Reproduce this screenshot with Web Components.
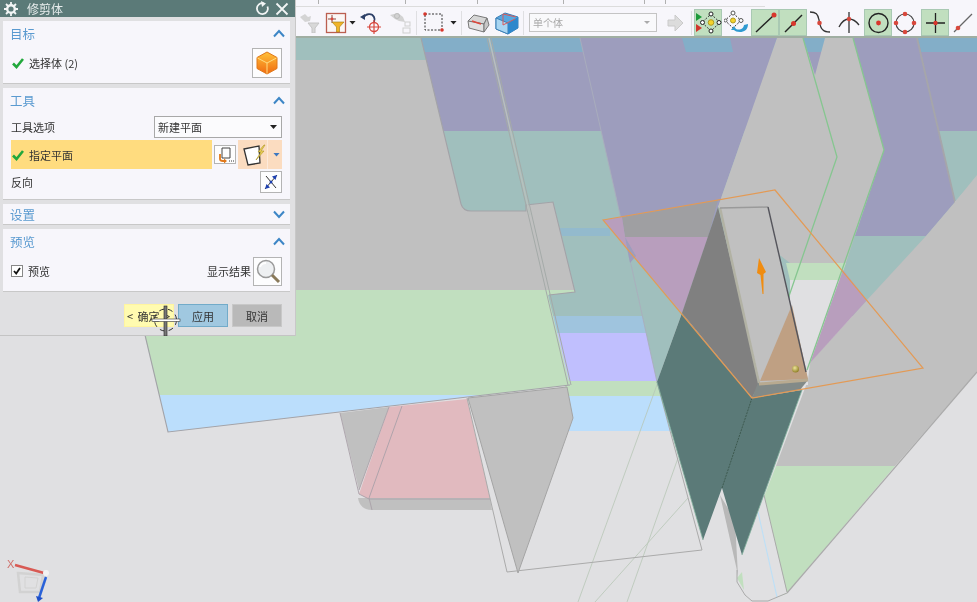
<!DOCTYPE html>
<html>
<head>
<meta charset="utf-8">
<title>修剪体</title>
<style>
  html, body { margin: 0; height: 100%; overflow: hidden; background: #e0e0e2; }
  body { font-family: "Noto Sans CJK SC", "Liberation Sans", sans-serif; }
</style>
</head>
<body>
<cad-scene></cad-scene>

<cad-toolbar>
  <tb-btn style="margin-left:4px;width:21px"><svg viewBox="0 0 21 21" width="21" height="21" fill="none"><path d="M1 5l5-3 3 3 3-1-1 5-5 1-2-2z" fill="#d4d4d4"/><path d="M9 11h11l-4 5v5h-3v-5z" fill="#d8d8d8" stroke="#c4c4c4"/></svg></tb-btn>
  <tb-btn style="margin-left:5px;width:22px"><svg viewBox="0 0 22 22" width="22" height="22" fill="none"><rect x="1.500" y="1.500" width="19" height="19" fill="#fbf7f5" stroke="#bb5f50" stroke-width="1.300"/><path d="M7 3v8M3 7h8" stroke="#8a4a40"/><circle cx="7" cy="7" r="1.400" fill="#d9483b"/><path d="M7 10h12l-4.500 5v5h-3v-5z" fill="#f0b428" stroke="#a07a10" stroke-width=".6"/></svg></tb-btn>
  <tb-caret style="margin-left:2px"></tb-caret>
  <tb-btn style="margin-left:3px;width:26px"><svg viewBox="0 0 26 24" width="26" height="24" fill="none"><path d="M4 7c3-5 9-5 11-1 1 2 1 3 0 5" stroke="#2c3f66" stroke-width="1.800"/><path d="M1 6l5-3v6z" fill="#2c3f66"/><circle cx="15" cy="16" r="4.500" stroke="#d8483f" stroke-width="1.300"/><path d="M15 9v14M8 16h14" stroke="#d8483f" stroke-width="1.200"/></svg></tb-btn>
  <tb-btn style="margin-left:3px;width:25px"><svg viewBox="0 0 25 24" width="25" height="24" fill="none"><path d="M2 4l8-2 5 4 2 5-6-1-4-2z" fill="#d2d2d2"/><circle cx="9" cy="5" r="2.500" stroke="#bcbcbc"/><rect x="17" y="11" width="5" height="4" stroke="#cfcfcf"/><rect x="15" y="17" width="7" height="5" stroke="#cfcfcf"/></svg></tb-btn>
  <tb-sep style="margin-left:3px"></tb-sep>
  <tb-btn style="margin-left:6px;width:21px"><svg viewBox="0 0 21 21" width="21" height="21" fill="none"><rect x="2" y="2" width="17" height="16" stroke="#333" stroke-dasharray="2 1.500"/><circle cx="2" cy="2" r="1.800" fill="#d8362c"/><circle cx="19" cy="18" r="1.800" fill="#d8362c"/></svg></tb-btn>
  <tb-caret style="margin-left:6px"></tb-caret>
  <tb-sep style="margin-left:4px"></tb-sep>
  <tb-btn style="margin-left:5px;width:23px"><svg viewBox="0 0 23 22" width="23" height="22" fill="none"><path d="M1 9l6-6 13 3-3 6z" fill="#d6d6d6" stroke="#777"/><path d="M1 9l16 3v8L2 16z" fill="#e2e2e2" stroke="#777"/><path d="M17 12l3-6 2 7-5 7z" fill="#c8c8c8" stroke="#777"/><path d="M5 9l9 3" stroke="#e0483c" stroke-width="1.400"/></svg></tb-btn>
  <tb-btn style="margin-left:5px;width:24px"><svg viewBox="0 0 24 24" width="24" height="24" fill="none"><path d="M1 7l9-5 13 4v11l-10 6-12-5z" fill="#58a8e0" stroke="#3b7fb5"/><path d="M1 7l12 5v11l-12-5z" fill="#a9d6f2" stroke="#3b7fb5"/><path d="M13 12l10-6v11l-10 6z" fill="#2f88cc"/><path d="M8 3v11M8 14l12-6M8 3l13 3" stroke="#d85a5a"/></svg></tb-btn>
  <tb-sep style="margin-left:4px"></tb-sep>
  <tb-select style="margin-left:5px">单个体</tb-select>
  <tb-btn style="margin-left:9px;width:18px"><svg viewBox="0 0 18 18" width="18" height="18"><path d="M2 6h7V1l8 8-8 8v-5H2z" fill="#dcdcdc" stroke="#cacaca"/></svg></tb-btn>
  <tb-sep style="margin-left:7px"></tb-sep>
  <tb-btn on style="margin-left:2px;width:28px"><svg viewBox="0 0 28 27" width="28" height="27" fill="none"><path d="M2 4l6 4-6 4z" fill="#1c9a3a"/><path d="M2 15l6 4-6 4z" fill="#d0362c"/><path d="M17 5l9 8.500-9 8.500-9-8.500z" stroke="#333" stroke-dasharray="2 1.500"/><circle cx="17" cy="13.500" r="2.800" fill="#f4d22c" stroke="#b09a20"/><circle cx="17" cy="5" r="2" fill="#fff" stroke="#222"/><circle cx="17" cy="22" r="2" fill="#fff" stroke="#222"/><circle cx="8.500" cy="13.500" r="2" fill="#fff" stroke="#222"/><circle cx="25" cy="13.500" r="2" fill="#fff" stroke="#222"/></svg></tb-btn>
  <tb-btn style="margin-left:2px;width:26px"><svg viewBox="0 0 26 27" width="26" height="27" fill="none"><path d="M9 4l8 7.500-8 7.500-8-7.500z" stroke="#333" stroke-dasharray="2 1.500"/><circle cx="9" cy="11.500" r="2.500" fill="#f4d22c" stroke="#b09a20"/><circle cx="9" cy="4" r="2" fill="#fff" stroke="#555"/><circle cx="1.500" cy="11.500" r="1.500" fill="#fff" stroke="#555"/><circle cx="17" cy="11.500" r="2" fill="#fff" stroke="#555"/><path d="M24 15c0 6-4 8-8 8-3 0-5-1-6-2l-3 0 3-4 2 3c3 1 7 1 8-4z" fill="#2f9ad0"/></svg></tb-btn>
  <tb-btn on style="margin-left:1px;width:28px"><svg viewBox="0 0 28 27" width="28" height="27" fill="none"><path d="M5 23L22 7" stroke="#222" stroke-width="1.400"/><circle cx="23" cy="6" r="2.500" fill="#d8362c"/></svg></tb-btn>
  <tb-btn on style="width:28px"><svg viewBox="0 0 28 27" width="28" height="27" fill="none"><path d="M6 23L23 6" stroke="#222" stroke-width="1.400"/><circle cx="14.500" cy="14.500" r="2.500" fill="#d8362c"/></svg></tb-btn>
  <tb-btn style="margin-left:2px;width:22px"><svg viewBox="0 0 22 27" width="22" height="27" fill="none"><path d="M1 3c6 0 8 2 9 8 1 4 1 8 4 10 2 2 5 2 7 2" stroke="#333" stroke-width="1.300"/><circle cx="10.500" cy="14" r="2.300" fill="#d8483c"/></svg></tb-btn>
  <tb-btn style="margin-left:7px;width:22px"><svg viewBox="0 0 22 27" width="22" height="27" fill="none"><path d="M11 3v21" stroke="#333" stroke-width="1.300"/><path d="M1 18c3-6 6-8 10-8s7 2 10 6" stroke="#333" stroke-width="1.300"/><circle cx="11" cy="10" r="2.200" fill="#d8483c"/></svg></tb-btn>
  <tb-btn on style="margin-left:4px;width:28px"><svg viewBox="0 0 28 27" width="28" height="27" fill="none"><circle cx="14.500" cy="14" r="9.500" stroke="#222" stroke-width="1.400"/><circle cx="14.500" cy="14" r="2.400" fill="#d8362c"/></svg></tb-btn>
  <tb-btn style="margin-left:1px;width:24px"><svg viewBox="0 0 24 27" width="24" height="27" fill="none"><circle cx="12" cy="14" r="9" stroke="#444" stroke-width="1.200"/><circle cx="12" cy="5" r="2.300" fill="#d8483c"/><circle cx="12" cy="23" r="2.300" fill="#d8483c"/><circle cx="3" cy="14" r="2.300" fill="#d8483c"/><circle cx="21" cy="14" r="2.300" fill="#d8483c"/></svg></tb-btn>
  <tb-btn on style="margin-left:4px;width:28px"><svg viewBox="0 0 28 27" width="28" height="27" fill="none"><path d="M5 14h19M14.500 4v20" stroke="#222" stroke-width="1.300"/><circle cx="14.500" cy="14" r="2.200" fill="#d8362c"/></svg></tb-btn>
  <tb-btn style="margin-left:3px;width:22px"><svg viewBox="0 0 22 27" width="22" height="27" fill="none"><path d="M2 23L20 5" stroke="#666" stroke-width="1.200"/><circle cx="6" cy="19" r="2.300" fill="#d8483c"/></svg></tb-btn>
</cad-toolbar>

<trim-dialog heading="修剪体">
  <dlg-panel heading="目标">
    <dlg-row style="height:30px;margin-top:3px;margin-bottom:5px">
      <check-mark></check-mark><span>选择体 (2)</span>
      <icon-btn size="30" style="margin-left:auto">
        <svg viewBox="0 0 24 24" width="24" height="24"><defs><linearGradient id="o" x1="0" y1="0" x2="0" y2="1"><stop offset="0" stop-color="#ffc23a"/><stop offset="1" stop-color="#f06a10"/></linearGradient></defs><path d="M12 1l10 5.500v11L12 23 2 17.500v-11z" fill="url(#o)" stroke="#e0781a"/><path d="M2.500 7L12 12l9.500-5M12 12v10.500" stroke="#ffdc80" fill="none"/></svg>
      </icon-btn>
    </dlg-row>
  </dlg-panel>

  <dlg-panel heading="工具">
    <dlg-row style="height:22px;margin-top:4px">
      <span>工具选项</span>
      <dlg-select style="margin-left:auto">新建平面</dlg-select>
    </dlg-row>
    <dlg-row style="height:29px;margin-top:2px;gap:2px">
      <req-field><check-mark></check-mark><span>指定平面</span></req-field>
      <icon-btn size="22" style="height:19px">
        <svg viewBox="0 0 20 17" width="20" height="17" fill="none"><path d="M7 2h8v10H7z" stroke="#444"/><path d="M5 8v5c0 1 1 2 3 2h1" stroke="#e0781a" stroke-width="1.800"/><path d="M9 12.500v5l3-2.500z" fill="#e0781a"/><path d="M14 15h1M16 15h1M18 15h1" stroke="#333"/></svg>
      </icon-btn>
      <plane-pick></plane-pick>
    </dlg-row>
    <dlg-row style="height:22px;margin-top:2px;margin-bottom:6px">
      <span>反向</span>
      <icon-btn size="22" style="margin-left:auto">
        <svg viewBox="0 0 20 20" width="20" height="20" fill="none"><path d="M5 4l10 12" stroke="#333"/><path d="M16 3L4 17" stroke="#333"/><path d="M16 3l-5 1.500 3.500 3.500z" fill="#1c3fb0"/><path d="M4 17l5-1.500-3.500-3.500z" fill="#1c3fb0"/><circle cx="10" cy="10" r="1.500" fill="#1c3fb0"/></svg>
      </icon-btn>
    </dlg-row>
  </dlg-panel>

  <dlg-panel heading="设置" collapsed></dlg-panel>

  <dlg-panel heading="预览">
    <dlg-row style="height:30px;margin-top:3px;margin-bottom:5px">
      <check-box></check-box><span style="margin-left:5px">预览</span>
      <span style="margin-left:auto;margin-right:2px">显示结果</span>
      <icon-btn size="29">
        <svg viewBox="0 0 26 26" width="26" height="26" fill="none"><circle cx="11" cy="11" r="8.500" fill="#eef0f2" stroke="#9a9a9a" stroke-width="1.500"/><path d="M5 9c1-3 3-4 6-4" stroke="#fff" stroke-width="2"/><path d="M17 17l7 7" stroke="#8a7a5a" stroke-width="3"/></svg>
      </icon-btn>
    </dlg-row>
  </dlg-panel>

  <dlg-button slot="footer" kind="ok">&lt; 确定 &gt;</dlg-button>
  <dlg-button slot="footer" kind="apply">应用</dlg-button>
  <dlg-button slot="footer" kind="cancel">取消</dlg-button>
</trim-dialog>

<cad-cursor></cad-cursor>

<script>
// the model is a free canvas, everything is in screen coordinates
class CadScene extends HTMLElement {
  constructor() {
    super();
    const shadow = this.attachShadow({ mode: 'open' });
    const teal = '#a0bfbd', purple = '#9d9dbd', grey = '#c0c0c0', green = '#c1dfbf', sky = '#bbdefc';
    const pink = '#b89ebd', edge = '#a3a3a8', dark = '#5b7a78', lime = '#86c690';
    shadow.innerHTML = `
      <style>
        :host { position: absolute; inset: 0; display: block; background: #e0e0e2; }
        svg { display: block; filter: blur(.35px); }
        text { font: 11px "Liberation Sans", sans-serif; fill: #d0706a; }
      </style>
      <svg viewBox="0 0 977 602" width="977" height="602" fill="none">
        <defs>
          <clipPath id="sheet">
            <path d="M100 38H421L461 204Q463 211 471 211H526L526 205L553 202L575 292L548 295L570 385L168 432L100 150Z"/>
          </clipPath>
          <radialGradient id="ball" cx=".4" cy=".35" r=".7"><stop offset="0" stop-color="#eee49a"/><stop offset="1" stop-color="#8a7a20"/></radialGradient>
        </defs>

        <!-- colour bands on the plate behind -->
        <rect x="400" y="38" width="577" height="14" fill="#83aec8"/>
        <rect x="400" y="52" width="577" height="79" fill="${purple}"/>
        <rect x="400" y="131" width="577" height="185" fill="${teal}"/>
        <rect x="540" y="228" width="70" height="8" fill="#93bacd"/>
        <rect x="400" y="316" width="260" height="17" fill="#9fc4de"/>
        <rect x="400" y="333" width="260" height="48" fill="#c0bffe"/>
        <rect x="565" y="381" width="160" height="15" fill="${green}"/>
        <rect x="565" y="396" width="160" height="35" fill="${sky}"/>

        <!-- second plate -->
        <path d="M580 38H777L718 207L708 237H625L615 192Z" fill="${purple}"/>
        <path d="M682 38H730L733 52H686Z" fill="#83aec8"/>
        <path d="M625 237H708L682 313L657 382Z" fill="${teal}"/>
        <path d="M853 38H918L955 202L926 236H855L884 150Z" fill="${purple}"/>
        <path d="M855 236H926L867 300L842 270Z" fill="${teal}"/>
        <path d="M580 38L615 192L657 382" stroke="#a9aebc" stroke-width=".9"/>
        <path d="M917 38L955 202L963 236" stroke="#a6a6aa" stroke-width="1.800"/>
        <path d="M955 202L977 178" stroke="#b6c4c6"/>

        <!-- big grey part on the right -->
        <path d="M867 300L926 236L955 202L977 175V372L895 466H776L808 380L810 362Z" fill="${grey}"/>
        <path d="M776 466H895L786 594L777 597L758 512Z" fill="${green}"/>
        <path d="M977 372L787 593" stroke="#aaa" stroke-width="1.200"/>

        <!-- rounded foot under the teal leaves -->
        <path d="M721 488L737 570V582L745 595L752 601H768L787 593L764 495Z" fill="#e0e0e2"/>
        <path d="M720 495L736 566L738 576L735 520Z" fill="#b8b8b8"/>
        <path d="M737 578L744 590L742 572Z" fill="${green}"/>
        <path d="M758 512L777 597" stroke="#bfdff5" stroke-width="1.200"/>
        <path d="M764 495L787 592M737 570V582L745 595L752 601H768L787 593" stroke="#aaa"/>

        <!-- main sheet -->
        <g clip-path="url(#sheet)">
          <rect x="90" y="30" width="500" height="30" fill="${teal}"/>
          <rect x="90" y="60" width="500" height="230" fill="${grey}"/>
          <rect x="90" y="290" width="500" height="105" fill="${green}"/>
          <rect x="90" y="395" width="500" height="40" fill="${sky}"/>
        </g>
        <path d="M421 38L461 204Q463 211 471 211H526L526 205L553 202L575 292L549 295M145 335L168 432L570 385" stroke="${edge}" stroke-width="1.100"/>
        <path d="M487 38L568 385M491 38L571 385" stroke="#a4aaa8"/>
        <path d="M489 38L530 215" stroke="#b8c0bc" stroke-width="1.500"/>

        <!-- lower block -->
        <path d="M340 413L389 407L359 490Z" fill="${grey}"/>
        <path d="M389 407L467 399L490 498L368 499L359 494Z" fill="#e1babf"/>
        <path d="M358 498Q360 510 372 510H492L490 498Z" fill="${grey}"/>
        <path d="M340 413L359 494M389 407L359 490M402 406L369 498L372 510M359 494L369 499H490" stroke="#a9a0a8" stroke-width=".9"/>

        <!-- thin construction lines and sheet below -->
        <path d="M658 382L578 602M678 458L627 602M688 498L595 602" stroke="#b8c6b6" stroke-width=".8"/>
        <path d="M467 398L507 572L702 550L657 382" stroke="#aaa"/>
        <path d="M468 398L567 387L573 418L518 573Z" fill="${grey}" stroke="#a4a4a4"/>

        <!-- chevrons with green edges -->
        <path d="M777 38H803L815 75L825 38H853L884 150L855 235L846 263H790L718 207Z" fill="${grey}"/>
        <path d="M786 263H846L840 280H790Z" fill="${green}"/>
        <path d="M790 280H840L808 365V385H790Z" fill="#e0e0e2"/>
        <path d="M843 270L867 300L810 363Z" fill="${pink}"/>
        <path d="M803 38L837 157L760 380M853 38L884 150L807 370" stroke="${lime}" stroke-width="1.300"/>

        <!-- what the plane shows through -->
        <path d="M622 217L718 200L708 237H625Z" fill="#9f9fa2"/>
        <path d="M603 220L622 217L625 237H708L682 313Z" fill="${pink}"/>
        <path d="M625 237L630 263L636 256Z" fill="${purple}"/>

        <!-- dark teal leaves -->
        <path d="M657 382L682 313L752 398L802 390L742 555L722 488L703 540Z" fill="${dark}"/>
        <path d="M752 398L722 488" stroke="#3e5a50" stroke-dasharray="2 1"/>
        <path d="M657 382L703 540M802 390L742 555" stroke="#7fae9a" stroke-width=".8"/>

        <!-- wedge -->
        <path d="M718 207L682 313L752 398L760 383Z" fill="#808080"/>
        <path d="M758 383L808 380L800 390L752 398Z" fill="#828a88"/>
        <path d="M720 208L768 207L808 380L760 383Z" fill="${grey}"/>
        <path d="M760 381L792 305L808 379Z" fill="#bfa083"/>
        <path d="M720 208L759 383" stroke="#b2b2a4" stroke-width="2.500"/>
        <path d="M720 208L768 207" stroke="#9a9a9a" stroke-width="1.500"/>
        <path d="M768 207L806 372" stroke="#55555c" stroke-width="1.400"/>
        <path d="M759 384L808 380" stroke="#b8aa90" stroke-width="3"/>

        <!-- datum plane and its handles -->
        <path d="M603 220L775 190L923 368L752 398Z" stroke="#e39a55" stroke-width="1.200"/>
        <path d="M759 258L766 272L763.500 274L763.500 294H762.500L760.500 275L757 273Z" fill="#f08c10"/>
        <circle cx="795.500" cy="369" r="3.500" fill="url(#ball)"/>

        <!-- triad -->
        <text x="7" y="568">X</text>
        <path d="M18 573L43 575L40 592L20 592Z" stroke="#d2d2d2" stroke-width="2.500"/>
        <path d="M25 577L38 578L36 588L25 588Z" stroke="#d2d2d2"/>
        <path d="M15 565L44 573" stroke="#d85a54" stroke-width="2.500"/>
        <path d="M46 577L39 598" stroke="#2a62d8" stroke-width="2.500"/>
        <path d="M36 596L43 598L38 602Z" fill="#1f4fc8"/>
        <circle cx="46" cy="573" r="3" fill="#f2f2f2"/>
      </svg>
    `;
  }
}

class CadToolbar extends HTMLElement {
  constructor() {
    super();
    const shadow = this.attachShadow({ mode: 'open' });
    shadow.innerHTML = `
      <style>
        :host {
          position: absolute; left: 295px; right: 0; top: 0; height: 36px;
          display: block; background: #f7f6fb; border-bottom: 2px solid #a0aea2;
        }
        .top { height: 6px; width: 470px; border-bottom: 1px solid #dcdcdc; display: flex; }
        .top i { width: 1px; height: 4px; background: #b0b0b0; margin-left: 80px; }
        .row { display: flex; align-items: center; height: 27px; margin-top: 2px; filter: blur(.3px); }
      </style>
      <div class="top"><i style="margin-left:23px"></i><i style="margin-left:86px"></i><i style="margin-left:71px"></i><i style="margin-left:85px"></i><i style="margin-left:80px"></i><i style="margin-left:20px"></i></div>
      <div class="row"><slot></slot></div>
    `;
  }
}

class TbBtn extends HTMLElement {
  constructor() {
    super();
    const shadow = this.attachShadow({ mode: 'open' });
    shadow.innerHTML = `
      <style>
        :host { display: flex; align-items: center; justify-content: center; height: 27px; flex: none; box-sizing: border-box; }
        :host([on]) { background: #c1dfbf; box-shadow: inset 0 0 0 1px #a9c9b3; }
        ::slotted(svg) { display: block; }
      </style>
      <slot></slot>
    `;
  }
}

class TbCaret extends HTMLElement {
  constructor() {
    super();
    const shadow = this.attachShadow({ mode: 'open' });
    shadow.innerHTML = `
      <style>
        :host { display: block; flex: none; width: 7px; height: 4px; background: #222; clip-path: polygon(0 0, 100% 0, 50% 100%); }
      </style>
    `;
  }
}

class TbSep extends HTMLElement {
  constructor() {
    super();
    const shadow = this.attachShadow({ mode: 'open' });
    shadow.innerHTML = `<style>:host { display: block; flex: none; width: 1px; height: 24px; background: #dfdfe2; }</style>`;
  }
}

class TbSelect extends HTMLElement {
  constructor() {
    super();
    const shadow = this.attachShadow({ mode: 'open' });
    shadow.innerHTML = `
      <style>
        :host {
          display: flex; align-items: center; flex: none; box-sizing: border-box;
          width: 128px; height: 19px; padding: 0 6px 0 3px;
          background: #f9f9fb; border: 1px solid #c4c4c4; color: #a8a8a8; font-size: 10px;
        }
        b { margin-left: auto; width: 6px; height: 3px; background: #aaa; clip-path: polygon(0 0, 100% 0, 50% 100%); }
      </style>
      <slot></slot><b></b>
    `;
  }
}

class TrimDialog extends HTMLElement {
  constructor() {
    super();
    const shadow = this.attachShadow({ mode: 'open' });
    shadow.innerHTML = `
      <style>
        :host {
          position: absolute; left: 0; top: 0; width: 296px; height: 336px; box-sizing: border-box;
          display: flex; flex-direction: column;
          background: #e0e0e2; border-bottom: 1px solid #c4c4c4; border-right: 1px solid #c8c8c8;
          font-size: 11px; color: #333; filter: blur(.3px);
        }
        header {
          height: 17px; flex: none; display: flex; align-items: center; gap: 9px; padding: 0 6px 0 4px;
          background: #5b7a78; color: #e6ecec; font-size: 12px;
        }
        header svg { display: block; }
        header .refresh { margin-left: auto; margin-right: -4px; }
        .body { display: flex; flex-direction: column; gap: 4px; padding: 4px 5px 0 3px; }
        footer { display: flex; justify-content: flex-end; gap: 4px; margin-top: 12px; padding-right: 13px; }
      </style>
      <header>
        <svg viewBox="0 0 14 14" width="14" height="14" fill="none"><circle cx="7" cy="7" r="3.800" stroke="#f2f5f5" stroke-width="2.400"/><path d="M7 0v3M7 11v3M0 7h3M11 7h3M2 2l2 2M10 10l2 2M12 2l-2 2M4 10l-2 2" stroke="#f2f5f5" stroke-width="1.800"/></svg>
        <span></span>
        <svg class="refresh" viewBox="0 0 15 15" width="15" height="15" fill="none"><path d="M12.500 5.500A5.500 5.500 0 1 1 8.500 2.200" stroke="#f2f5f5" stroke-width="1.800"/><path d="M6 0l5 2.500L7 6z" fill="#f2f5f5"/></svg>
        <svg viewBox="0 0 14 14" width="14" height="14" fill="none"><path d="M1.500 1.500l11 11M12.500 1.500l-11 11" stroke="#f2f5f5" stroke-width="1.800"/></svg>
      </header>
      <div class="body"><slot></slot></div>
      <footer><slot name="footer"></slot></footer>
    `;
    shadow.querySelector('span').textContent = this.getAttribute('heading');
  }
}

class DlgPanel extends HTMLElement {
  constructor() {
    super();
    const shadow = this.attachShadow({ mode: 'open' });
    const collapsed = this.hasAttribute('collapsed');
    shadow.innerHTML = `
      <style>
        :host { display: block; background: #f7f6fb; border-bottom: 1px solid #c8c8c8; box-sizing: border-box; }
        .head {
          display: flex; align-items: center; justify-content: space-between;
          height: ${collapsed ? 20 : 24}px; padding: 0 5px 0 7px; color: #5a9ad0; font-size: 12.500px;
        }
        .body { padding: 0 8px; }
        svg { display: block; }
      </style>
      <div class="head">
        <span></span>
        <svg viewBox="0 0 12 9" width="12" height="9" fill="none"><path d="${collapsed ? 'M1 1.500l5 5.500 5-5.500' : 'M1 7.500l5-5.500 5 5.500'}" stroke="#3d86c6" stroke-width="2"/></svg>
      </div>
      <div class="body"><slot></slot></div>
    `;
    shadow.querySelector('span').textContent = this.getAttribute('heading');
  }
}

class DlgRow extends HTMLElement {
  constructor() {
    super();
    const shadow = this.attachShadow({ mode: 'open' });
    shadow.innerHTML = `
      <style>:host { display: flex; align-items: center; }</style>
      <slot></slot>
    `;
  }
}

class CheckMark extends HTMLElement {
  constructor() {
    super();
    const shadow = this.attachShadow({ mode: 'open' });
    shadow.innerHTML = `
      <style>:host { display: block; flex: none; width: 12px; height: 12px; margin: 0 5px 0 1px; } svg { display: block; }</style>
      <svg viewBox="0 0 12 12" width="12" height="12" fill="none"><path d="M1 6.500l3.500 3.500L11 2" stroke="#22a83c" stroke-width="2.600"/></svg>
    `;
  }
}

class CheckBox extends HTMLElement {
  constructor() {
    super();
    const shadow = this.attachShadow({ mode: 'open' });
    shadow.innerHTML = `
      <style>
        :host { display: block; flex: none; box-sizing: border-box; width: 12px; height: 12px; background: #fff; border: 1px solid #888; }
        svg { display: block; }
      </style>
      <svg viewBox="0 0 10 10" width="10" height="10" fill="none"><path d="M2 5l2.200 2.500L8 2" stroke="#111" stroke-width="1.800"/></svg>
    `;
  }
}

class IconBtn extends HTMLElement {
  constructor() {
    super();
    const shadow = this.attachShadow({ mode: 'open' });
    const size = this.getAttribute('size') || 22;
    shadow.innerHTML = `
      <style>
        :host {
          display: flex; align-items: center; justify-content: center; flex: none; box-sizing: border-box;
          width: ${size}px; height: ${size}px; background: #fdfdfe; border: 1px solid #b4b4b4;
        }
        ::slotted(svg) { display: block; }
      </style>
      <slot></slot>
    `;
  }
}

class DlgSelect extends HTMLElement {
  constructor() {
    super();
    const shadow = this.attachShadow({ mode: 'open' });
    shadow.innerHTML = `
      <style>
        :host {
          display: flex; align-items: center; box-sizing: border-box; width: 128px; height: 22px;
          padding: 0 4px 0 3px; background: #fbfbfd; border: 1px solid #a8a8a8; color: #333;
        }
        b { margin-left: auto; width: 7px; height: 4px; background: #222; clip-path: polygon(0 0, 100% 0, 50% 100%); }
      </style>
      <slot></slot><b></b>
    `;
  }
}

class ReqField extends HTMLElement {
  constructor() {
    super();
    const shadow = this.attachShadow({ mode: 'open' });
    shadow.innerHTML = `
      <style>:host { display: flex; align-items: center; width: 201px; height: 29px; flex: none; background: #ffdc7f; }</style>
      <slot></slot>
    `;
  }
}

class PlanePick extends HTMLElement {
  constructor() {
    super();
    const shadow = this.attachShadow({ mode: 'open' });
    shadow.innerHTML = `
      <style>
        :host { display: flex; align-items: center; width: 44px; height: 29px; flex: none; background: #fbdcc0; padding-left: 5px; box-sizing: border-box; }
        svg { display: block; }
        b { margin-left: 5px; width: 7px; height: 4px; background: #3d78c0; clip-path: polygon(0 0, 100% 0, 50% 100%); }
        i { width: 1px; height: 29px; background: #fdeadb; margin-left: 1px; }
      </style>
      <svg viewBox="0 0 23 22" width="23" height="22" fill="none"><path d="M1 5l15-3 1 17-12 2z" fill="#fff" stroke="#333" stroke-width="1.300"/><path d="M21 1l-6 7h3l-5 8 8-9h-3l4-6z" fill="#f0d65a" stroke="#a89020" stroke-width=".6"/></svg>
      <i></i><b></b>
    `;
  }
}

class DlgButton extends HTMLElement {
  constructor() {
    super();
    const shadow = this.attachShadow({ mode: 'open' });
    shadow.innerHTML = `
      <style>
        :host {
          display: flex; align-items: center; justify-content: center; box-sizing: border-box;
          width: 50px; height: 23px; border: 1px solid transparent; color: #333; font-size: 11px;
          white-space: nowrap;
        }
        :host([kind=ok]) { background: #fffbb0; border-color: #fff5a0; justify-content: flex-start; padding-left: 2px; word-spacing: 2px; overflow: hidden; }
        :host([kind=apply]) { background: #a0c8e0; border: 1.500px solid #72abc9; }
        :host([kind=cancel]) { background: #b9b9b9; border-color: #c8c8c8; }
      </style>
      <slot></slot>
    `;
  }
}

// mouse pointer lying over the OK button
class CadCursor extends HTMLElement {
  constructor() {
    super();
    const shadow = this.attachShadow({ mode: 'open' });
    shadow.innerHTML = `
      <style>
        :host { position: absolute; left: 150px; top: 304px; width: 32px; height: 32px; display: block; }
        svg { display: block; }
      </style>
      <svg viewBox="0 0 32 32" width="32" height="32" fill="none">
        <circle cx="15.500" cy="16" r="11" stroke="#333" stroke-dasharray="5 4"/>
        <rect x="14" y="2" width="3" height="30" fill="#777" stroke="#222" stroke-width=".6"/>
        <rect x="2" y="15" width="28" height="2.500" fill="#fff" stroke="#333" stroke-width=".6"/>
      </svg>
    `;
  }
}

customElements.define('cad-scene', CadScene);
customElements.define('cad-toolbar', CadToolbar);
customElements.define('tb-btn', TbBtn);
customElements.define('tb-caret', TbCaret);
customElements.define('tb-sep', TbSep);
customElements.define('tb-select', TbSelect);
customElements.define('trim-dialog', TrimDialog);
customElements.define('dlg-panel', DlgPanel);
customElements.define('dlg-row', DlgRow);
customElements.define('check-mark', CheckMark);
customElements.define('check-box', CheckBox);
customElements.define('icon-btn', IconBtn);
customElements.define('dlg-select', DlgSelect);
customElements.define('req-field', ReqField);
customElements.define('plane-pick', PlanePick);
customElements.define('dlg-button', DlgButton);
customElements.define('cad-cursor', CadCursor);
</script>
</body>
</html>
